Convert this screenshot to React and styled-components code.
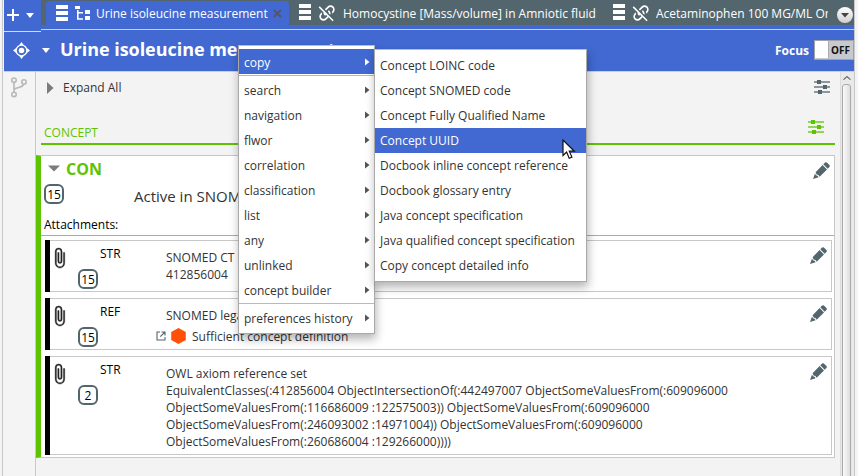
import React from "react";
import styled, { createGlobalStyle, css } from "styled-components";

const BLUE = "#4169d1";
const SLATE = "#53666e";
const GREEN = "#5ec300";

const GlobalStyle = createGlobalStyle`
  * { box-sizing: border-box; }
  body { margin: 0; background: #f3f3f3; }
  svg { display: block; flex: none; }
`;

const Window = styled.div`
  position: relative;
  width: 858px;
  height: 476px;
  overflow: hidden;
  padding-left: 2px;
  background: #f4f4f4;
  font: 12px/17px "Open Sans", "Noto Sans", sans-serif;
  color: #333;
  white-space: nowrap;
`;

const Frame = styled.div`
  width: 853px;
  height: 476px;
  border: solid #c8c8c8;
  border-width: 0 1px 0 1px;
  padding-left: 1px;
  display: flex;
  flex-direction: column;
  overflow: hidden;
`;

/* ---------- tab strip ---------- */
const TabStrip = styled.header`
  display: flex;
  height: 32px;
  flex: none;
  background: ${BLUE};
`;
const AddButton = styled.div`
  width: 37px;
  height: 32px;
  border-bottom: 1px solid #d3dcf4;
  display: flex;
  align-items: flex-start;
  gap: 7px;
  padding: 9px 0 0 3px;
`;
const Tabs = styled.div`
  flex: 1;
  min-width: 0;
  height: 30px;
  border-bottom: 1px solid #c6d1f0;
`;
const TabRow = styled.div`
  height: 25px;
  background: ${SLATE};
  display: flex;
  padding-left: 5px;
`;
const Tab = styled.div`
  display: flex;
  flex: none;
  align-items: center;
  width: ${(p) => p.$width}px;
  height: ${(p) => (p.$active ? 24 : 25)}px;
  margin-top: ${(p) => (p.$active ? 1 : 0)}px;
  padding-left: 10px;
  border-radius: 4px 4px 0 0;
  background: ${(p) => (p.$active ? BLUE : "transparent")};
  color: #fff;
  overflow: hidden;
`;
const TabLabel = styled.span`
  margin-left: ${(p) => p.$gap}px;
  padding-top: ${(p) => p.$drop || 0}px;
  overflow: hidden;
  ${(p) => p.$max && css`width: ${p.$max}px;`}
`;
const TabMenuButton = styled.div`
  width: 16px;
  height: 16px;
  margin: 7px 1px 0 auto;
  border-radius: 50%;
  background: linear-gradient(#fff, #cfcfcf);
  display: grid;
  place-items: center;
`;

/* ---------- title bar ---------- */
const TitleBar = styled.div`
  flex: none;
  height: 42px;
  margin-top: -2px;
  padding: 2px 0 3px;
  display: flex;
  align-items: center;
  background: linear-gradient(${BLUE}, ${BLUE}) 0 2px no-repeat;
  border-bottom: 1px solid #c9cdd8;
  color: #fff;
`;
const Title = styled.h1`
  margin: -2px 0 0 8px;
  font-size: 18px;
  line-height: 24px;
  font-weight: 700;
  letter-spacing: -0.04px;
`;
const FocusLabel = styled.span`
  margin: 0 5px 0 auto;
  font-weight: 700;
`;
const Toggle = styled.div`
  width: 40px;
  height: 20px;
  border: 1px solid #9fa3a8;
  background: #c6cad0;
  display: flex;
  font-size: 10px;
  font-weight: 700;
  line-height: 19px;
  color: #111;
`;
const Knob = styled.div`
  width: 14px;
  height: 18px;
  margin-right: 2px;
  background: #fff;
  border-right: 1px solid #aaa;
  border-bottom: 1px solid #ccc;
`;

/* ---------- body ---------- */
const Body = styled.div`
  display: flex;
  flex: 1;
  min-height: 0;
`;
const Rail = styled.div`
  width: 32px;
  border-right: 1px solid #c8c8c8;
  padding: 5px 0 0 6px;
`;
const Content = styled.main`
  flex: 1;
  min-width: 0;
  background: #f3f3f3;
`;
const ExpandRow = styled.div`
  height: 44px;
  display: flex;
  padding: 7px 10px 0 10px;
  justify-content: space-between;
`;
const ExpandToggle = styled.div`
  display: flex;
  align-items: flex-start;
  gap: 9px;
  svg { margin-top: 3px; }
`;
const SlidersSlot = styled.div`
  padding-top: 1px;
`;
const SectionHead = styled.div`
  display: flex;
  justify-content: space-between;
  height: 29px;
  margin: 0 5px;
  padding: 3px 11px 0 3px;
  border-bottom: 2px solid ${GREEN};
  color: ${GREEN};
  span { padding-top: 5px; }
`;
const ConceptCard = styled.section`
  width: 799px;
  height: 303px;
  margin-top: 10px;
  border: 1px solid #c8c8c8;
  border-left: 5px solid ${GREEN};
  background: #fff;
`;
const CardHead = styled.div`
  height: 80px;
  border-bottom: 1px solid #aaa;
  display: grid;
  grid-template-columns: 90px 1fr 20px;
  grid-template-rows: 28px 32px 20px;
  padding: 0 1px 0 3px;
`;
const ConceptType = styled.div`
  display: flex;
  align-items: flex-start;
  gap: 6px;
  padding: 2px 0 0 4px;
  color: ${GREEN};
  font-size: 16px;
  line-height: 22px;
  font-weight: 700;
  svg { margin-top: 7px; }
`;
const Status = styled.div`
  font-size: 15px;
  line-height: 20px;
  padding-top: 2px;
`;
const Attachments = styled.div`
  grid-column: 1 / 4;
  color: #000;
`;
const Badge = styled.div`
  width: 20px;
  height: 20px;
  border: 2px solid ${SLATE};
  border-radius: 6px;
  background: #fff;
  color: #000;
  text-align: center;
  line-height: 17px;
`;
const Row = styled.article`
  display: flex;
  height: ${(p) => p.$height}px;
  margin: ${(p) => p.$top}px 2px 0 4px;
  background: #000;
  padding-left: 5px;
`;
const RowPanel = styled.div`
  display: flex;
  flex: 1;
  min-width: 0;
  border: 1px solid #c8c8c8;
  border-left: 0;
  background: #fff;
`;
const ClipCell = styled.div`
  width: 28px;
  padding-top: 6px;
  svg { margin-left: -1px; }
`;
const KindCell = styled.div`
  width: 88px;
  color: #000;
  padding-top: 4px;
`;
const KindName = styled.div`
  padding-left: 22px;
  margin-bottom: 7px;
`;
const TextCell = styled.div`
  flex: 1;
  padding-top: 8px;
`;
const Line = styled.div``;
const DefinitionLine = styled.div`
  display: flex;
  align-items: center;
  margin: 3px 0 0 -10px;
  height: 18px;
  svg:nth-child(2) { margin: 0 6px 0 4px; }
`;
const EditCell = styled.div`
  width: 21px;
  padding-top: 6px;
`;

/* ---------- scrollbar ---------- */
const ScrollTrack = styled.div`
  width: 14px;
  margin-left: auto;
  border-left: 1px solid #dcdcdc;
  background: #e9e9e9;
  padding: 4px 0 0 1px;
  svg { margin-left: 1px; }
`;
const ScrollThumb = styled.div`
  width: 9px;
  height: 420px;
  margin-top: 4px;
  border: 1px solid #a9a9a9;
  border-radius: 3px 3px 0 0;
  background: linear-gradient(90deg, #fafafa, #dedede);
`;

/* ---------- popup menus ---------- */
const Popup = styled.div`
  position: absolute;
  left: ${(p) => p.$x}px;
  top: ${(p) => p.$y}px;
  width: ${(p) => p.$width}px;
  padding: 3px 0;
  background: #fff;
  border: 1px solid #a9a9a9;
  border-top-color: #bcbcbc;
  box-shadow: 1px 5px 9px rgba(0, 0, 0, 0.3);
`;
const Item = styled.div`
  height: 25px;
  display: flex;
  align-items: flex-start;
  justify-content: space-between;
  padding: ${(p) => (p.$submenu ? 5 : 4)}px 4px 0 5px;
  background: ${(p) => (p.$active ? BLUE : "transparent")};
  color: ${(p) => (p.$active ? "#fff" : "#333")};
  svg { margin-top: 4px; }
`;
const Separator = styled.div`
  height: 3px;
  border: solid #fff;
  border-width: 1px 0;
  background: #b9b9b9;
`;
const Cursor = styled.svg`
  position: absolute;
  left: 562px;
  top: 139px;
`;

/* ---------- icons ---------- */
const Triangle = ({ w, h, points, fill }) => (
  <svg width={w} height={h}><polygon points={points} fill={fill} /></svg>
);
const StackIcon = () => (
  <svg width="12" height="17" fill="#fff">
    <rect width="12" height="4" y="0" /><rect width="12" height="4" y="6" /><rect width="12" height="4" y="12" />
  </svg>
);
const TreeIcon = () => (
  <svg width="16" height="15" fill="#fff">
    <rect x="0" y="0" width="5" height="3" />
    <rect x="10" y="4" width="5" height="4" /><rect x="10" y="10" width="5" height="4" />
    <path d="M2 4h1.6v2h4.4v1.5H3.6v4.7h4.4v1.6H2z" />
  </svg>
);
const UnlinkIcon = () => (
  <svg width="20" height="20" viewBox="0 0 24 24" fill="#fff">
    <path d="M2,5.27L3.28,4L20,20.72L18.73,22L13.9,17.17L11.29,19.78C9.34,21.73 6.17,21.73 4.22,19.78C2.27,17.83 2.27,14.66 4.22,12.71L5.71,11.22C5.7,12.04 5.83,12.86 6.11,13.65L5.64,14.12C4.46,15.29 4.46,17.19 5.64,18.36C6.81,19.54 8.71,19.54 9.88,18.36L12.5,15.76L10.88,14.15C10.87,14.39 10.77,14.64 10.59,14.83C10.2,15.22 9.56,15.22 9.17,14.83C8.12,13.77 7.63,12.37 7.72,11L2,5.27M12.71,4.22C14.66,2.27 17.83,2.27 19.78,4.22C21.73,6.17 21.73,9.34 19.78,11.29L18.29,12.78C18.3,11.96 18.17,11.14 17.89,10.36L18.36,9.88C19.54,8.71 19.54,6.81 18.36,5.64C17.19,4.46 15.29,4.46 14.12,5.64L10.79,8.97L9.38,7.55L12.71,4.22M13.41,9.17C13.8,8.78 14.44,8.78 14.83,9.17C16.2,10.54 16.61,12.5 16.06,14.23L14.28,12.46C14.23,11.78 13.94,11.11 13.41,10.58C13,10.2 13,9.56 13.41,9.17Z" />
  </svg>
);
const CloseIcon = () => (
  <svg width="9" height="9" stroke="#53565e" strokeWidth="1.8"><path d="M.8.8l7.2 7.2M8 .8L.8 8" /></svg>
);
const TargetIcon = () => (
  <svg width="17" height="17" viewBox="0 0 17 17">
    <path d="M8.5 0l2.4 3.2H6.1zM8.5 17l2.4-3.2H6.1zM0 8.5l3.2-2.4v4.8zM17 8.5l-3.2-2.4v4.8z" fill="#fff" />
    <circle cx="8.5" cy="8.5" r="5.4" fill="none" stroke="#fff" strokeWidth="1.3" />
    <circle cx="8.5" cy="8.5" r="2.8" fill="#fff" />
  </svg>
);
const BranchIcon = () => (
  <svg width="18" height="21" fill="none" stroke="#b8b8b8" strokeWidth="1.6">
    <circle cx="4" cy="3.2" r="2.2" /><circle cx="14" cy="5" r="2.2" /><circle cx="4" cy="17.4" r="2.2" />
    <path d="M4 5.4v9.8M4 13c0-3 8.6-1.6 9.6-5.8" />
  </svg>
);
const SlidersIcon = ({ color }) => (
  <svg width="16" height="15" fill={color}>
    <rect y="1.2" width="16" height="1.6" opacity=".8" /><rect y="6.2" width="16" height="1.6" opacity=".8" /><rect y="11.2" width="16" height="1.6" opacity=".8" />
    <rect x="3" y="0" width="4" height="4" /><rect x="9" y="5" width="4" height="4" /><rect x="4" y="10" width="4" height="4" />
  </svg>
);
const PencilIcon = () => (
  <svg width="17" height="17" viewBox="0 0 17 17" fill={SLATE}>
    <path d="M12.1.6q.9-.9 1.8 0l2.500 2.500q.9.900 0 1.800L14.700 6.700 10.300 2.300z" />
    <path d="M9.600 3l4.400 4.400-7.300 7.300-1.200-1.600-1.900-.7-1-2.200z" />
    <path d="M2 11.500l.9 1.800 1.700.5 1 1.500L0 17z" />
  </svg>
);
const ClipIcon = () => (
  <svg width="21" height="22" viewBox="0 0 24 24" preserveAspectRatio="none" fill="#222" stroke="#222" strokeWidth=".4">
    <path d="M16.5,6V17.5A4,4 0 0,1 12.5,21.5A4,4 0 0,1 8.5,17.5V5A2.5,2.5 0 0,1 11,2.5A2.5,2.5 0 0,1 13.5,5V15.5A1,1 0 0,1 12.5,16.5A1,1 0 0,1 11.5,15.5V6H10V15.5A2.5,2.5 0 0,0 12.5,18A2.5,2.5 0 0,0 15,15.5V5A4,4 0 0,0 11,1A4,4 0 0,0 7,5V17.5A5.5,5.5 0 0,0 12.5,23A5.5,5.5 0 0,0 18,17.5V6H16.5Z" />
  </svg>
);
const OpenIcon = () => (
  <svg width="10" height="10" fill="none" stroke={SLATE} strokeWidth="1.1">
    <path d="M4 1H1v8h8V6M5.5 1H9v3.5M9 1L4.3 5.7" />
  </svg>
);
const HexIcon = () => (
  <svg width="16" height="16"><polygon points="8.5,0 15.8,4 15.8,12 8.5,16 1.2,12 1.2,4" fill="#ff5208" /></svg>
);

const MAIN_ITEMS = ["search", "navigation", "flwor", "correlation", "classification", "list", "any", "unlinked", "concept builder"];
const COPY_ITEMS = [
  "Concept LOINC code", "Concept SNOMED code", "Concept Fully Qualified Name", "Concept UUID",
  "Docbook inline concept reference", "Docbook glossary entry", "Java concept specification",
  "Java qualified concept specification", "Copy concept detailed info",
];

const MenuEntry = ({ label, active }) => (
  <Item $active={active} $submenu>
    {label}
    <Triangle w={5} h={8} points="0,0.5 4.5,4 0,7.5" fill={active ? "#fff" : "#555"} />
  </Item>
);

const Attachment = ({ kind, stamp, height, top, children }) => (
  <Row $height={height} $top={top}>
    <RowPanel>
      <ClipCell><ClipIcon /></ClipCell>
      <KindCell>
        <KindName>{kind}</KindName>
        <Badge>{stamp}</Badge>
      </KindCell>
      <TextCell>{children}</TextCell>
      <EditCell><PencilIcon /></EditCell>
    </RowPanel>
  </Row>
);

export default function App() {
  return (
    <Window>
      <GlobalStyle />
      <Frame>
        <TabStrip>
          <AddButton>
            <svg width="12" height="12" fill="#fff"><path d="M5 0h2v5h5v2H7v5H5V7H0V5h5z" /></svg>
            <svg width="8" height="9"><polygon points="0,4 8,4 4,9" fill="#fff" /></svg>
          </AddButton>
          <Tabs>
            <TabRow>
              <Tab $active $width={243}>
                <StackIcon />
                <TabLabel $gap={7}><TreeIcon /></TabLabel>
                <TabLabel $gap={5} $drop={1}>Urine isoleucine measurement</TabLabel>
                <TabLabel $gap={5}><CloseIcon /></TabLabel>
              </Tab>
              <Tab $width={314}>
                <StackIcon />
                <TabLabel $gap={6}><UnlinkIcon /></TabLabel>
                <TabLabel $gap={6} $drop={2}>Homocystine [Mass/volume] in Amniotic fluid</TabLabel>
              </Tab>
              <Tab $width={226}>
                <StackIcon />
                <TabLabel $gap={6}><UnlinkIcon /></TabLabel>
                <TabLabel $gap={5} $max={172} $drop={2}>Acetaminophen 100 MG/ML Oral Solution</TabLabel>
              </Tab>
              <TabMenuButton><Triangle w={8} h={5} points="0,0 8,0 4,4.5" fill="#444" /></TabMenuButton>
            </TabRow>
          </Tabs>
        </TabStrip>
        <TitleBar>
          <svg width="9" height="17" />
          <TargetIcon />
          <svg width="22" height="8"><polygon points="12,2 20,2 16,7" fill="#fff" /></svg>
          <Title>Urine isoleucine measurement</Title>
          <FocusLabel>Focus</FocusLabel>
          <Toggle><Knob />OFF</Toggle>
        </TitleBar>
        <Body>
          <Rail><BranchIcon /></Rail>
          <Content>
            <ExpandRow>
              <ExpandToggle>
                <Triangle w={8} h={12} points="1,0 7.5,6 1,12" fill="#7b7b7b" />
                Expand All
              </ExpandToggle>
              <SlidersSlot><SlidersIcon color={SLATE} /></SlidersSlot>
            </ExpandRow>
            <SectionHead>
              <span>CONCEPT</span>
              <SlidersSlot><SlidersIcon color={GREEN} /></SlidersSlot>
            </SectionHead>
            <ConceptCard>
              <CardHead>
                <ConceptType>
                  <Triangle w={12} h={7} points="0,0.5 12,0.5 6,6.5" fill="#7b7b7b" />
                  CON
                </ConceptType>
                <div />
                <EditCell><PencilIcon /></EditCell>
                <Badge>15</Badge>
                <Status>Active in SNOMED CT core modules</Status>
                <div />
                <Attachments>Attachments:</Attachments>
              </CardHead>
              <Attachment kind="STR" stamp="15" height={52} top={4}>
                <Line>SNOMED CT integer id</Line>
                <Line>412856004</Line>
              </Attachment>
              <Attachment kind="REF" stamp="15" height={52} top={6}>
                <Line>SNOMED legacy implication</Line>
                <DefinitionLine><OpenIcon /><HexIcon />Sufficient concept definition</DefinitionLine>
              </Attachment>
              <Attachment kind="STR" stamp="2" height={99} top={6}>
                <Line>OWL axiom reference set</Line>
                <Line>EquivalentClasses(:412856004 ObjectIntersectionOf(:442497007 ObjectSomeValuesFrom(:609096000</Line>
                <Line>ObjectSomeValuesFrom(:116686009 :122575003)) ObjectSomeValuesFrom(:609096000</Line>
                <Line>ObjectSomeValuesFrom(:246093002 :14971004)) ObjectSomeValuesFrom(:609096000</Line>
                <Line>ObjectSomeValuesFrom(:260686004 :129266000))))</Line>
              </Attachment>
            </ConceptCard>
          </Content>
          <ScrollTrack>
            <svg width="8" height="4" fill="none" stroke="#666" strokeWidth="1.2"><path d="M.5 3.6L4 .6l3.5 3" /></svg>
            <ScrollThumb />
          </ScrollTrack>
        </Body>
      </Frame>
      <Popup $x={238} $y={45} $width={137}>
        <MenuEntry label="copy" active />
        <Separator />
        {MAIN_ITEMS.map((label) => <MenuEntry key={label} label={label} />)}
        <Separator />
        <MenuEntry label="preferences history" />
      </Popup>
      <Popup $x={374} $y={49} $width={213}>
        {COPY_ITEMS.map((label) => <Item key={label} $active={label === "Concept UUID"}>{label}</Item>)}
      </Popup>
      <Cursor width="14" height="21" viewBox="0 0 14 21">
        <path d="M1 1v15.5l3.6-3.4 2.6 6.2 2.7-1.2-2.6-5.9h5z" fill="#fff" stroke="#111" strokeWidth="1.2" />
      </Cursor>
    </Window>
  );
}
